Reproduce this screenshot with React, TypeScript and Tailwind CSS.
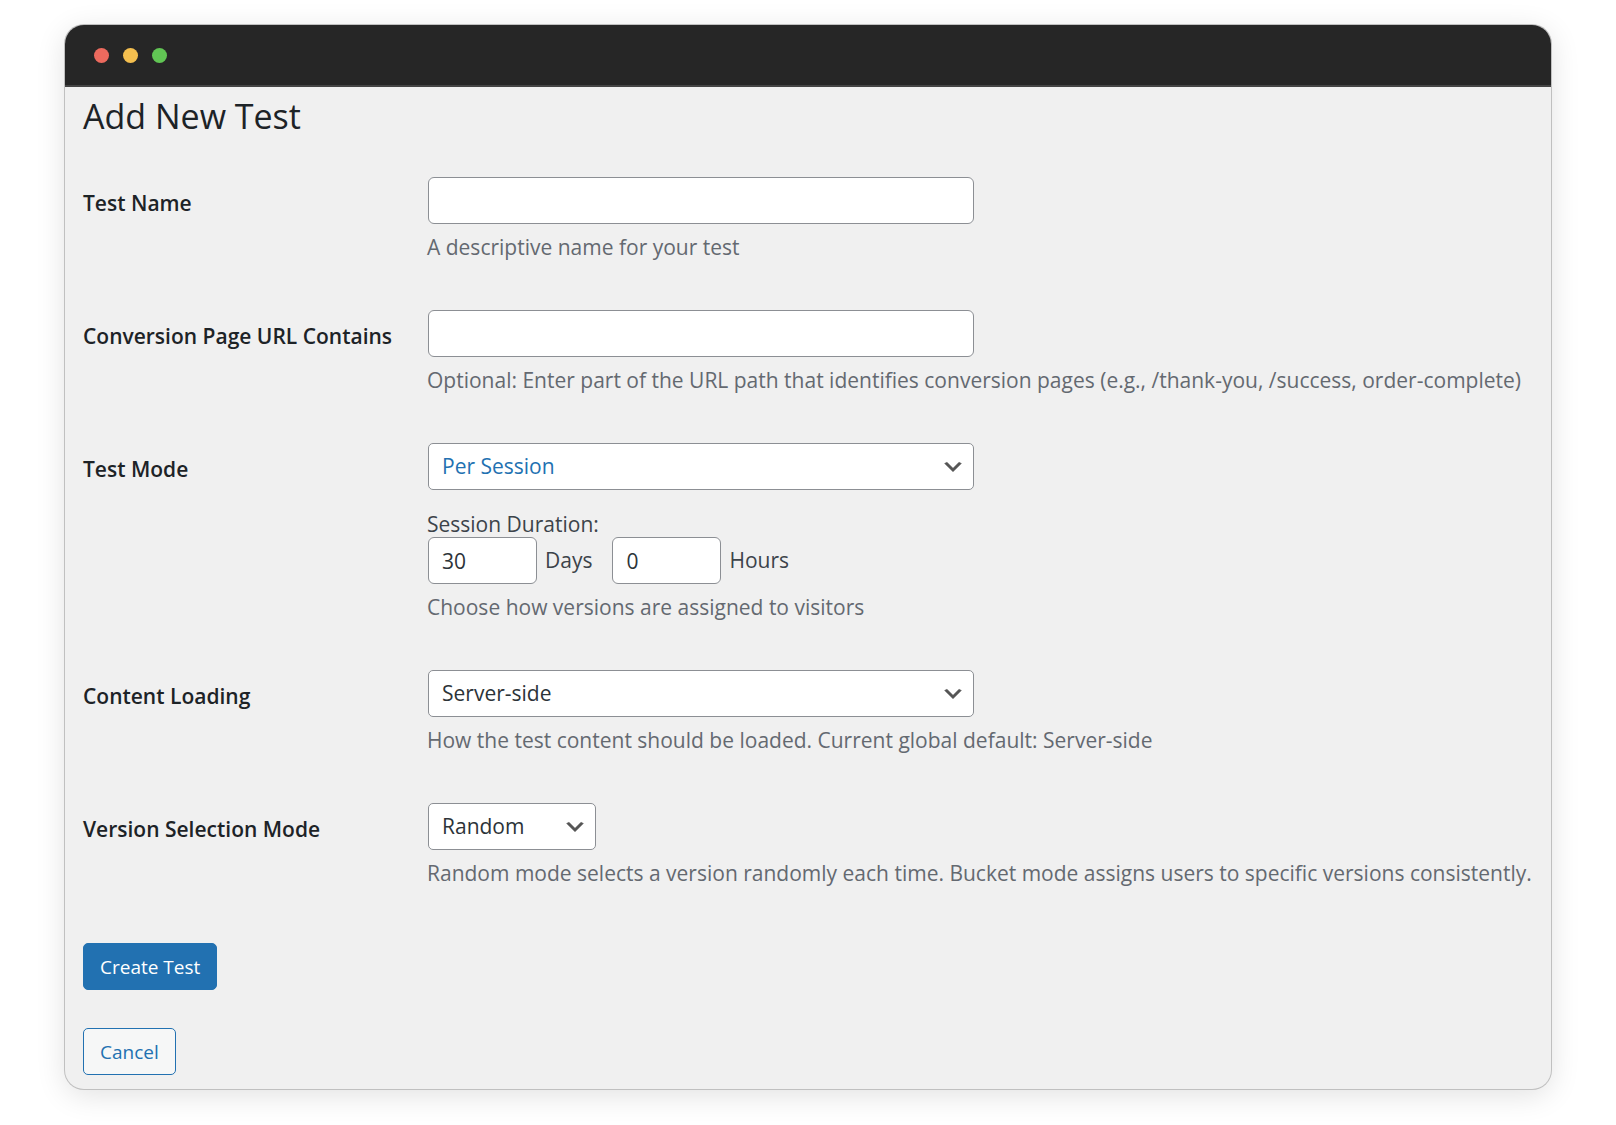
import type { ReactNode } from 'react';

const control = 'h-[47px] rounded-md border border-[#8c8f94] bg-white px-[13px] text-[21px] text-[#2c3338]';

function Row({ id, label, help, children }: { id: string; label: string; help: string; children: ReactNode }) {
  return (
    <div className="grid grid-cols-[344px_minmax(0,1fr)]">
      <label htmlFor={id} className="pt-2.5 text-[21px] leading-8 font-semibold text-[#1d2327]">
        {label}
      </label>
      <div>
        <div className="flex flex-col items-start pl-px">{children}</div>
        <p className="mt-[7px] text-[21px] leading-8 text-[#646970]">{help}</p>
      </div>
    </div>
  );
}

function Select({ id, value, wrap, tone }: { id: string; value: string; wrap: string; tone: string }) {
  return (
    <div className={`relative ${wrap}`}>
      <select
        id={id}
        className={`h-[47px] w-full appearance-none rounded-[5px] border border-[#8c8f94] bg-white pr-10 pl-[13px] text-[21px] ${tone}`}
      >
        <option>{value}</option>
      </select>
      <svg
        viewBox="0 0 20 20"
        className="pointer-events-none absolute top-3 right-[9px] size-6"
        fill="#555555"
        stroke="#555555"
        strokeWidth="0.4"
        aria-hidden="true"
      >
        <path d="M5 6l5 5 5-5 2 1-7 7-7-7 2-1z" />
      </svg>
    </div>
  );
}

export default function App() {
  return (
    <div className="bg-white px-[65px] pt-[25px] pb-8 font-['Open_Sans','Noto_Sans',sans-serif]">
      <main className="overflow-hidden rounded-[19px] bg-[#f0f0f0] shadow-[0_0_0_1px_#c0c0c0,0_6px_30px_rgba(0,0,0,0.12)]">
        <header className="flex h-[62px] items-center gap-[14px] border-b-2 border-[#444] bg-[#262626] px-[29px]">
          <span className="size-[15px] rounded-full bg-[#ec6a5e]" />
          <span className="size-[15px] rounded-full bg-[#f4bf4f]" />
          <span className="size-[15px] rounded-full bg-[#61c554]" />
        </header>
        <form className="px-[18px] pt-1 pb-[14px]" onSubmit={(e) => e.preventDefault()}>
          <h1 className="text-[34px] leading-[50px] text-[#1d2327]">Add New Test</h1>
          <div className="mt-9 flex flex-col gap-[47px]">
            <Row id="name" label="Test Name" help="A descriptive name for your test">
              <input id="name" type="text" className={`${control} w-[546px]`} />
            </Row>
            <Row
              id="url"
              label="Conversion Page URL Contains"
              help="Optional: Enter part of the URL path that identifies conversion pages (e.g., /thank-you, /success, order-complete)"
            >
              <input id="url" type="text" className={`${control} w-[546px]`} />
            </Row>
            <Row id="mode" label="Test Mode" help="Choose how versions are assigned to visitors">
              <Select id="mode" value="Per Session" wrap="w-[546px]" tone="text-[#2271b1]" />
              <fieldset className="mt-[21px] text-[21px] text-[#3c434a]">
                <legend className="-ml-px leading-[26px]">Session Duration:</legend>
                <div className="flex items-center gap-5">
                  <div className="flex items-center gap-2">
                    <input id="days" type="text" inputMode="numeric" defaultValue="30" className={`${control} w-[109px]`} />
                    <label htmlFor="days">Days</label>
                  </div>
                  <div className="flex items-center gap-2">
                    <input id="hours" type="text" inputMode="numeric" defaultValue="0" className={`${control} w-[109px]`} />
                    <label htmlFor="hours">Hours</label>
                  </div>
                </div>
              </fieldset>
            </Row>
            <Row
              id="loading"
              label="Content Loading"
              help="How the test content should be loaded. Current global default: Server-side"
            >
              <Select id="loading" value="Server-side" wrap="w-[546px]" tone="text-[#2c3338]" />
            </Row>
            <Row
              id="selection"
              label="Version Selection Mode"
              help="Random mode selects a version randomly each time. Bucket mode assigns users to specific versions consistently."
            >
              <Select id="selection" value="Random" wrap="w-[168px]" tone="text-[#2c3338]" />
            </Row>
          </div>
          <div className="mt-[54px] flex flex-col items-start gap-[38px]">
            <button type="submit" className="h-[47px] rounded-[5px] border border-[#2271b1] bg-[#2271b1] px-4 pt-0.5 text-[19px] text-white">
              Create Test
            </button>
            <button type="button" className="h-[47px] rounded-[5px] border border-[#2271b1] bg-[#f6f7f7] px-4 pt-0.5 text-[19px] text-[#2271b1]">
              Cancel
            </button>
          </div>
        </form>
      </main>
    </div>
  );
}
